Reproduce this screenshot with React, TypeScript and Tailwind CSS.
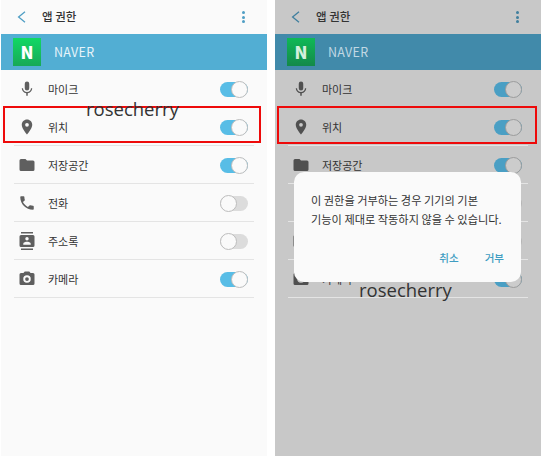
import type { ReactNode } from "react";

const font = "font-['Noto_Sans_CJK_KR','Noto_Sans',sans-serif]";

const icons: Record<string, ReactNode> = {
  mic: (
    <path d="M12 14a3 3 0 0 0 3-3V5a3 3 0 0 0-6 0v6a3 3 0 0 0 3 3zm5.3-3c0 3-2.5 5.1-5.3 5.1S6.7 14 6.7 11H5c0 3.4 2.7 6.2 6 6.7V21h2v-3.3c3.3-.5 6-3.3 6-6.7h-1.7z" />
  ),
  pin: (
    <path d="M12 2C8.1 2 5 5.1 5 9c0 5.2 7 13 7 13s7-7.8 7-13c0-3.9-3.1-7-7-7zm0 9.5a2.5 2.5 0 1 1 0-5 2.5 2.5 0 0 1 0 5z" />
  ),
  folder: (
    <path d="M10 4H4a2 2 0 0 0-2 2v12a2 2 0 0 0 2 2h16a2 2 0 0 0 2-2V8a2 2 0 0 0-2-2h-8l-2-2z" />
  ),
  phone: (
    <path d="M6.6 10.8c1.4 2.8 3.8 5.1 6.6 6.6l2.2-2.2c.3-.3.7-.4 1-.2 1.1.4 2.3.6 3.6.6.6 0 1 .4 1 1V20c0 .6-.4 1-1 1C10.6 21 3 13.4 3 4c0-.6.4-1 1-1h3.5c.6 0 1 .4 1 1 0 1.3.2 2.5.6 3.6.1.3 0 .7-.2 1l-2.3 2.2z" />
  ),
  contacts: (
    <path d="M4 0h16v2H4V0zm0 22h16v2H4v-2zM20 4H4a2 2 0 0 0-2 2v12a2 2 0 0 0 2 2h16a2 2 0 0 0 2-2V6a2 2 0 0 0-2-2zm-8 2.8a2.3 2.3 0 1 1 0 4.6 2.3 2.3 0 0 1 0-4.6zM17 17H7v-1.5c0-1.7 3.3-2.5 5-2.5s5 .8 5 2.5V17z" />
  ),
  camera: (
    <path
      fillRule="evenodd"
      d="M9 2 7.2 4H4a2 2 0 0 0-2 2v12a2 2 0 0 0 2 2h16a2 2 0 0 0 2-2V6a2 2 0 0 0-2-2h-3.2L15 2H9zm3 5a5 5 0 1 1 0 10 5 5 0 0 1 0-10zm0 2.5a2.5 2.5 0 1 0 0 5 2.5 2.5 0 0 0 0-5z"
    />
  ),
};

const rows = [
  { icon: "mic", label: "마이크", on: true },
  { icon: "pin", label: "위치", on: true },
  { icon: "folder", label: "저장공간", on: true },
  { icon: "phone", label: "전화", on: false },
  { icon: "contacts", label: "주소록", on: false },
  { icon: "camera", label: "카메라", on: true },
];

function Toggle({ on, dim }: { on: boolean; dim: boolean }) {
  const track = on ? (dim ? "bg-[#4a9fc4]" : "bg-[#58bde6]") : dim ? "bg-[#b5b5b5]" : "bg-[#dcdcdc]";
  const knob = dim ? "bg-[#cccccc] border-[#9c9c9c]" : "bg-[#fafafa] border-[#bdbdbd]";
  return (
    <div className={`relative w-[28px] h-[15px] rounded-full ${track}`}>
      <div
        className={`absolute top-[-1px] w-[17px] h-[17px] rounded-full border ${knob} ${on ? "right-0" : "left-0"}`}
      />
    </div>
  );
}

function Screen({ dim }: { dim: boolean }) {
  const text = "text-[#333333]";
  const accent = dim ? "bg-[#3f7f9e]" : "bg-[#4f9ec4]";
  return (
    <div className={`w-[266px] h-[456px] flex flex-col ${dim ? "bg-[#c8c8c8]" : "bg-[#fafafa]"}`}>
      <div className="h-[34px] flex items-center pl-[16px] pr-[22px]">
        <svg
          viewBox="0 0 9 12"
          className={`w-[9px] h-[12px] ${dim ? "text-[#3f7f9e]" : "text-[#4f9ec4]"}`}
          fill="none"
          stroke="currentColor"
          strokeWidth={1.3}
        >
          <path d="M8 .8 1.6 6 8 11.2" />
        </svg>
        <span className={`ml-[16px] text-[11.5px] font-medium flex-1 ${text}`}>앱 권한</span>
        <div className="flex flex-col gap-[1.5px]">
          <span className={`w-[3px] h-[3px] rounded-full ${accent}`} />
          <span className={`w-[3px] h-[3px] rounded-full ${accent}`} />
          <span className={`w-[3px] h-[3px] rounded-full ${accent}`} />
        </div>
      </div>
      <div className={`h-[36px] flex items-center pl-[12px] ${dim ? "bg-[#418aaa]" : "bg-[#52aed3]"}`}>
        <div
          className={`w-[28px] h-[28px] flex items-center justify-center text-[17px] font-black bg-gradient-to-b ${
            dim ? "from-[#0fb956] to-[#13894a] text-[#d4efdc]" : "from-[#10d864] to-[#17a957] text-white"
          }`}
        >
          N
        </div>
        <span className={`ml-[13px] pt-px text-[12.5px] tracking-[0.3px] ${dim ? "text-[#c0d8e4]" : "text-[#e6f4fa]"}`}>
          NAVER
        </span>
      </div>
      <div className="flex flex-col px-[13px]">
        {rows.map((r) => (
          <div key={r.label} className="h-[38px] flex items-center border-b border-[#e4e4e4] pt-px pl-[4px] pr-[6px]">
            <svg
              viewBox="0 0 24 24"
              className={`w-[18px] h-[18px] ${dim ? "text-[#505050]" : "text-[#5f5f5f]"}`}
              fill="currentColor"
            >
              {icons[r.icon]}
            </svg>
            <span className={`ml-[12px] text-[11px] flex-1 ${text}`}>{r.label}</span>
            <Toggle on={r.on} dim={dim} />
          </div>
        ))}
      </div>
    </div>
  );
}

export default function App() {
  return (
    <div className={`relative w-[542px] h-[456px] overflow-hidden bg-white flex ${font}`}>
      <div className="pl-px">
        <Screen dim={false} />
      </div>
      <div className="ml-[8px]">
        <Screen dim />
      </div>

      <div className="absolute left-[3px] top-[106px] w-[258px] h-[37px] border-[2px] border-[#ee0a0a]" />
      <div className="absolute left-[277px] top-[106px] w-[260px] h-[38px] border-[2px] border-[#ee0a0a]" />

      <div className="absolute left-[294px] top-[172px] w-[227px] h-[110px] rounded-[10px] bg-[#fafafa] pt-[19px] pl-[17px] pr-[10px]">
        <p className="text-[11.2px] leading-[18.5px] text-[#333333] whitespace-nowrap">
          이 권한을 거부하는 경우 기기의 기본
          <br />
          기능이 제대로 작동하지 않을 수 있습니다.
        </p>
        <div className="absolute right-[17px] bottom-[16px] flex gap-[26px] text-[10.5px] font-medium text-[#3f9dc2]">
          <span>취소</span>
          <span>거부</span>
        </div>
      </div>

      <span className="absolute left-[86px] top-[96px] text-[18.5px] leading-[26px] font-medium text-[#333333] font-['Open_Sans',sans-serif]">
        rosecherry
      </span>
      <span className="absolute left-[359px] top-[277px] text-[18.5px] leading-[26px] font-medium text-[#333333] font-['Open_Sans',sans-serif]">
        rosecherry
      </span>
    </div>
  );
}
